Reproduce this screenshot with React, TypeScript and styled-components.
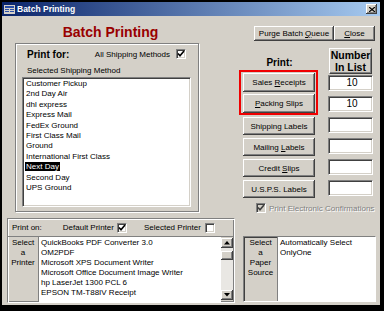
import styled, { createGlobalStyle } from "styled-components";

const GlobalStyle = createGlobalStyle`
  html, body {
    margin: 0;
    padding: 0;
    background: #000;
  }
  body {
    width: 384px;
    height: 311px;
    overflow: hidden;
    font-family: "Liberation Sans", Arial, sans-serif;
    font-size: 8px;
    color: #000;
  }
`;

const raised = `
  background: #d4d0c8;
  box-shadow: inset -1px -1px #404040, inset 1px 1px #fff, inset -2px -2px #808080;
`;

const sunken = `
  border: 1px solid;
  border-color: #808080 #fff #fff #808080;
  box-shadow: inset 1px 1px #404040, inset -1px -1px #d4d0c8;
`;

const Window = styled.div`
  width: 378px;
  height: 303px;
  margin: 2px 0 0 2px;
  background: #d4d0c8;
  display: flex;
  flex-direction: column;
`;

const TitleBar = styled.div`
  height: 14px;
  flex-shrink: 0;
  display: flex;
  align-items: center;
  padding: 0 3px 0 2px;
  background: linear-gradient(to right, #0a246a, #a6caf0);
  color: #fff;
  font-weight: bold;
  font-size: 8.5px;
`;

const TitleText = styled.span`
  margin-left: 2px;
  flex: 1;
`;

const CloseBox = styled.div`
  width: 11px;
  height: 10px;
  ${raised}
  display: flex;
  align-items: center;
  justify-content: center;
`;

const Top = styled.div`
  display: flex;
  height: 198px;
  flex-shrink: 0;
  padding: 0 4px 0 13px;
`;

const LeftCol = styled.div`
  width: 184px;
  display: flex;
  flex-direction: column;
`;

const Heading = styled.h1`
  margin: 7.5px 0 0;
  padding-left: 7px;
  text-align: center;
  font-size: 14px;
  line-height: 16px;
  font-weight: bold;
  color: #990000;
`;

const GroupBox = styled.div`
  margin-top: 3.5px;
  height: 169px;
  box-sizing: border-box;
  border: 1px solid #808080;
  box-shadow: inset 1px 1px #fff, 1px 1px #fff;
  display: flex;
  flex-direction: column;
  padding: 3px 12px 0 11px;
`;

const PrintForRow = styled.div`
  height: 14px;
  display: flex;
  align-items: center;
  justify-content: space-between;
`;

const BoldLabel = styled.span<{ $size?: number }>`
  font-weight: bold;
  font-size: ${(p) => p.$size ?? 10}px;
`;

const Inline = styled.label<{ $gap?: number; $ml?: number }>`
  display: flex;
  align-items: center;
  gap: ${(p) => p.$gap ?? 6}px;
  margin-left: ${(p) => p.$ml ?? 0}px;
`;

const CaptionLine = styled.div`
  margin-top: 5px;
  line-height: 10px;
`;

const ListBox = styled.div`
  margin: 1px 0 0 -5px;
  width: 169px;
  height: 130px;
  box-sizing: border-box;
  background: #fff;
  ${sunken}
  padding: 1px 0 0 3px;
`;

const ListItem = styled.div`
  line-height: 10.4px;
  white-space: nowrap;
`;

const Selected = styled.span`
  background: #000;
  color: #fff;
  padding: 0 1px;
  margin-left: -1px;
`;

const RightCol = styled.div`
  width: 137px;
  margin-left: auto;
  display: flex;
  flex-direction: column;
`;

const TopButtons = styled.div`
  margin-top: 10px;
  height: 15px;
  display: flex;
  justify-content: flex-end;
  padding-right: 1px;
`;

const Button = styled.button<{ $w: number; $h?: number }>`
  width: ${(p) => p.$w}px;
  height: ${(p) => p.$h ?? 18}px;
  border: none;
  padding: 0;
  ${raised}
  font-family: "Liberation Sans", Arial, sans-serif;
  font-size: 8px;
  color: #000;
  white-space: nowrap;
`;

const PrintArea = styled.div`
  margin-top: 7px;
  display: flex;
`;

const ButtonCol = styled.div`
  width: 79px;
  display: flex;
  flex-direction: column;
`;

const PrintLabel = styled.div`
  height: 22px;
  box-sizing: border-box;
  padding: 9px 0 0 2px;
  text-align: center;
  font-weight: bold;
  font-size: 10px;
  line-height: 12px;
`;

const Highlight = styled.div`
  border: 2px solid #f00000;
  padding: 1px 0 0 2px;
  display: flex;
  flex-direction: column;
  gap: 2px;
`;

const ButtonStack = styled.div`
  margin-top: 2px;
  padding-left: 4px;
  display: flex;
  flex-direction: column;
  gap: 3px;
`;

const NumberCol = styled.div`
  margin-left: 10px;
  width: 45px;
  display: flex;
  flex-direction: column;
  gap: 5px;
`;

const NumberHeader = styled.div`
  margin: 0 0 -4px 1px;
  width: 43px;
  height: 26px;
  box-sizing: border-box;
  border: 1px solid;
  border-color: #fff #404040 #404040 #fff;
  box-shadow: inset -1px -1px #808080;
  text-align: center;
  font-weight: bold;
  font-size: 10.5px;
  line-height: 11.5px;
  padding-top: 1px;
`;

const NumberBox = styled.div`
  height: 16px;
  box-sizing: border-box;
  background: #fff;
  ${sunken}
  text-align: center;
  font-size: 10px;
  line-height: 14px;
  padding-left: 3px;
`;

const ConfirmRow = styled.div`
  margin-top: 5px;
  padding-left: 17px;
  display: flex;
  align-items: center;
  gap: 3px;
  color: #808080;
  text-shadow: 1px 1px 0 #fff;
  white-space: nowrap;
`;

const CheckBox = styled.span<{ $disabled?: boolean }>`
  width: 10px;
  height: 10px;
  box-sizing: border-box;
  flex-shrink: 0;
  background: ${(p) => (p.$disabled ? "#d4d0c8" : "#fff")};
  ${sunken}
  display: flex;
  align-items: center;
  justify-content: center;
`;

const Bottom = styled.div`
  display: flex;
  margin-top: 4px;
  padding-left: 5px;
`;

const PrinterPanel = styled.div`
  width: 228px;
  height: 85px;
  box-sizing: border-box;
  border: 1px solid;
  border-color: #808080 #fff #fff #808080;
  box-shadow: inset 1px 1px #fff, inset -1px -1px #808080;
  display: flex;
  flex-direction: column;
`;

const PrintOnRow = styled.div`
  height: 18px;
  flex-shrink: 0;
  box-sizing: border-box;
  border-bottom: 1px solid #808080;
  display: flex;
  align-items: center;
  padding-left: 4px;
  white-space: nowrap;
`;

const PanelBody = styled.div`
  flex: 1;
  display: flex;
  min-height: 0;
`;

const LabelCell = styled.div<{ $w: number }>`
  width: ${(p) => p.$w}px;
  flex-shrink: 0;
  box-sizing: border-box;
  border-right: 1px solid #808080;
  text-align: center;
  line-height: 10px;
  padding-top: 1px;
`;

const WhiteList = styled.div`
  flex: 1;
  background: #fff;
  padding: 1px 0 0 2px;
  line-height: 10px;
  white-space: nowrap;
  overflow: hidden;
`;

const ScrollBar = styled.div`
  width: 12px;
  flex-shrink: 0;
  display: flex;
  flex-direction: column;
  background: #e9e7e3;
  margin: 1px 1px 2px 0;
`;

const ScrollButton = styled.div<{ $h?: number }>`
  height: ${(p) => p.$h ?? 10}px;
  ${raised}
  display: flex;
  align-items: center;
  justify-content: center;
`;

const ScrollTrack = styled.div`
  flex: 1;
  display: flex;
  flex-direction: column;
  justify-content: space-between;
  padding-top: 3px;
`;

const PaperPanel = styled.div`
  margin: 18px 0 0 8px;
  width: 133px;
  height: 66px;
  box-sizing: border-box;
  border: 1px solid;
  border-color: #808080 #fff #fff #808080;
  box-shadow: inset 1px 1px #404040;
  display: flex;
`;

const Check = ({ color = "#000" }: { color?: string }) => (
  <svg width="8" height="8" viewBox="0 0 8 8">
    <path d="M1 3.5 L3 5.8 L7 1" stroke={color} strokeWidth="1.6" fill="none" />
  </svg>
);

const Arrow = ({ down }: { down?: boolean }) => (
  <svg width="6" height="4" viewBox="0 0 6 4">
    <path d={down ? "M0 0 H6 L3 3.5 Z" : "M0 3.5 H6 L3 0 Z"} fill="#000" />
  </svg>
);

const shippingMethods = [
  "Customer Pickup",
  "2nd Day Air",
  "dhl express",
  "Express Mail",
  "FedEx Ground",
  "First Class Mail",
  "Ground",
  "International First Class",
  "Next Day",
  "Second Day",
  "UPS Ground",
];

const printers = [
  "QuickBooks PDF Converter 3.0",
  "OM2PDF",
  "Microsoft XPS Document Writer",
  "Microsoft Office Document Image Writer",
  "hp LaserJet 1300 PCL 6",
  "EPSON TM-T88IV Receipt",
];

export default function App() {
  return (
    <>
      <GlobalStyle />
      <Window>
        <TitleBar>
          <svg width="11" height="9" viewBox="0 0 11 9">
            <rect x="0" y="0" width="11" height="9" fill="#d4d0c8" />
            <rect x="1" y="1" width="9" height="2" fill="#2a4fa8" />
            <rect x="1" y="4" width="4" height="1" fill="#2a4fa8" />
            <rect x="6" y="4" width="4" height="1" fill="#2a4fa8" />
            <rect x="1" y="6" width="4" height="1" fill="#2a4fa8" />
            <rect x="6" y="6" width="4" height="1" fill="#2a4fa8" />
          </svg>
          <TitleText>Batch Printing</TitleText>
          <CloseBox>
            <svg width="6" height="5" viewBox="0 0 6 5">
              <path d="M0 0 L6 5 M6 0 L0 5" stroke="#000" strokeWidth="1.2" />
            </svg>
          </CloseBox>
        </TitleBar>

        <Top>
          <LeftCol>
            <Heading>Batch Printing</Heading>
            <GroupBox>
              <PrintForRow>
                <BoldLabel>Print for:</BoldLabel>
                <Inline>
                  All Shipping Methods
                  <CheckBox>
                    <Check />
                  </CheckBox>
                </Inline>
              </PrintForRow>
              <CaptionLine>Selected Shipping Method</CaptionLine>
              <ListBox>
                {shippingMethods.map((m) => (
                  <ListItem key={m}>{m === "Next Day" ? <Selected>{m}</Selected> : m}</ListItem>
                ))}
              </ListBox>
            </GroupBox>
          </LeftCol>

          <RightCol>
            <TopButtons>
              <Button $w={80} $h={15}>
                Purge Batch <u>Q</u>ueue
              </Button>
              <Button $w={41} $h={15}>
                <u>C</u>lose
              </Button>
            </TopButtons>
            <PrintArea>
              <ButtonCol>
                <PrintLabel>Print:</PrintLabel>
                <Highlight>
                  <Button $w={72} $h={19}>
                    Sales <u>R</u>eceipts
                  </Button>
                  <Button $w={72} $h={19}>
                    <u>P</u>acking Slips
                  </Button>
                </Highlight>
                <ButtonStack>
                  <Button $w={72}>Shipping Labels</Button>
                  <Button $w={72}>
                    Mailing <u>L</u>abels
                  </Button>
                  <Button $w={72}>
                    Credit <u>S</u>lips
                  </Button>
                  <Button $w={72}>U.S.P.S. Labels</Button>
                </ButtonStack>
              </ButtonCol>
              <NumberCol>
                <NumberHeader>
                  Number
                  <br />
                  In List
                </NumberHeader>
                <NumberBox>10</NumberBox>
                <NumberBox>10</NumberBox>
                <NumberBox />
                <NumberBox />
                <NumberBox />
                <NumberBox />
              </NumberCol>
            </PrintArea>
            <ConfirmRow>
              <CheckBox $disabled>
                <Check color="#404040" />
              </CheckBox>
              Print Electronic Confirmations
            </ConfirmRow>
          </RightCol>
        </Top>

        <Bottom>
          <PrinterPanel>
            <PrintOnRow>
              Print on:
              <Inline $gap={3} $ml={21}>
                Default Printer
                <CheckBox>
                  <Check />
                </CheckBox>
              </Inline>
              <Inline $gap={4} $ml={17}>
                Selected Printer
                <CheckBox />
              </Inline>
            </PrintOnRow>
            <PanelBody>
              <LabelCell $w={31}>
                Select
                <br />a<br />
                Printer
              </LabelCell>
              <WhiteList>
                {printers.map((p) => (
                  <div key={p}>{p}</div>
                ))}
              </WhiteList>
              <ScrollBar>
                <ScrollButton>
                  <Arrow />
                </ScrollButton>
                <ScrollTrack>
                  <ScrollButton $h={9} />
                  <ScrollButton>
                    <Arrow down />
                  </ScrollButton>
                </ScrollTrack>
              </ScrollBar>
            </PanelBody>
          </PrinterPanel>

          <PaperPanel>
            <LabelCell $w={34}>
              Select
              <br />a<br />
              Paper
              <br />
              Source
            </LabelCell>
            <WhiteList>
              <div>Automatically Select</div>
              <div>OnlyOne</div>
            </WhiteList>
          </PaperPanel>
        </Bottom>
      </Window>
    </>
  );
}
